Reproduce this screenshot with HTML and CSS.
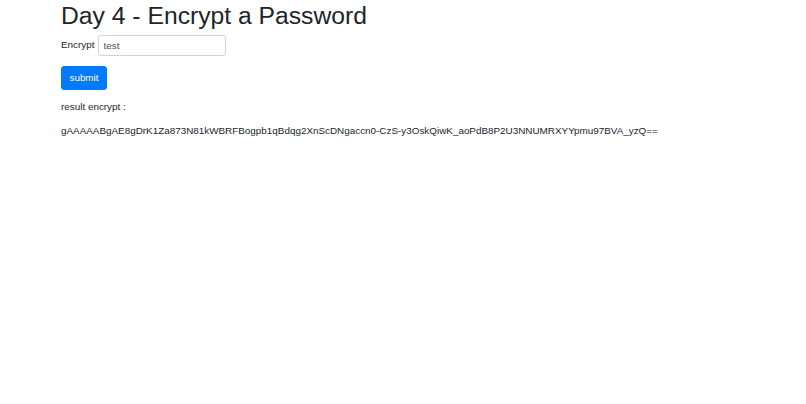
FILE: index.html
```html
<!DOCTYPE html>
<html>
<head>
<meta charset="utf-8">
<link rel="stylesheet" href="styles.css">
</head>
<body>
<div class="container">
  <h1 class="title">Day 4 - Encrypt a Password</h1>
  <form class="form">
    <div class="row">
      <label class="label">Encrypt</label>
      <input class="input" type="text" value="test">
    </div>
    <button class="btn" type="button">submit</button>
  </form>
  <p class="result-label">result encrypt :</p>
  <p class="result">gAAAAABgAE8gDrK1Za873N81kWBRFBogpb1qBdqg2XnScDNgaccn0-CzS-y3OskQiwK_aoPdB8P2U3NNUMRXYYpmu97BVA_yzQ==</p>
</div>
</body>
</html>
```
FILE: styles.css
```css
html, body {
  margin: 0;
  padding: 0;
  background: #fff;
}
body {
  font-family: "Liberation Sans", Arial, sans-serif;
  font-size: 9.88px;
  line-height: 1.5;
  color: #212529;
}
.container {
  padding-left: 61px;
}
.title {
  margin: 0;
  padding-top: 1px;
  font-size: 24.7px;
  font-weight: 500;
  line-height: 1.2;
  color: #212529;
}
.form {
  display: flex;
  flex-direction: column;
  align-items: flex-start;
}
.row {
  display: flex;
  align-items: center;
  gap: 4px;
  margin-top: 4px;
}
.label {
  font-size: 9.88px;
}
.input {
  box-sizing: border-box;
  width: 128px;
  height: 21px;
  border: 1px solid #ced4da;
  border-radius: 3px;
  padding: 0 4px;
  font-family: "Liberation Sans", Arial, sans-serif;
  font-size: 9.88px;
  color: #495057;
  background: #fff;
  outline: none;
}
.btn {
  margin-top: 10px;
  box-sizing: border-box;
  width: 46px;
  height: 24px;
  border: 1px solid #007bff;
  border-radius: 3px;
  background: #007bff;
  color: #fff;
  font-family: "Liberation Sans", Arial, sans-serif;
  font-size: 9.88px;
  padding: 0;
}
.result-label {
  margin: 10px 0 0 0;
}
.result {
  margin: 10px 0 0 0;
}
```
